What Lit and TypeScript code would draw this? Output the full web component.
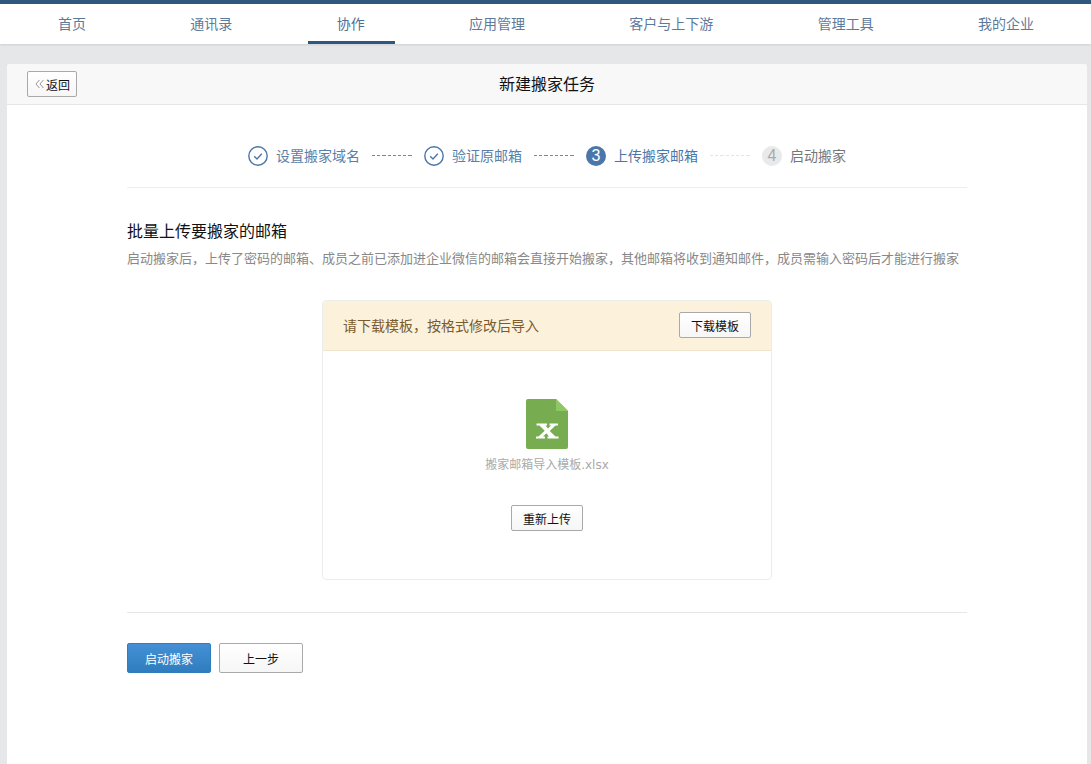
import { LitElement, html, css, svg } from "lit";
import { customElement } from "lit/decorators.js";

const NAV = ["首页", "通讯录", "协作", "应用管理", "客户与上下游", "管理工具", "我的企业"];
const STEPS = [
  { label: "设置搬家域名", state: "done", n: 1 },
  { label: "验证原邮箱", state: "done", n: 2 },
  { label: "上传搬家邮箱", state: "active", n: 3 },
  { label: "启动搬家", state: "todo", n: 4 },
];

const check = svg`<svg class="ico" width="20" height="20" viewBox="0 0 20 20" fill="none">
  <circle cx="10" cy="10" r="9.2" stroke="#4a76a8" stroke-width="1.4"/>
  <path d="M6.2 10.2l2.8 2.7 4.8-5.2" stroke="#4a76a8" stroke-width="1.4"/>
</svg>`;

@customElement("app-root")
export class AppRoot extends LitElement {
  static styles = css`
    :host {
      display: block;
      height: 764px;
      overflow: hidden;
      background: #e6e7e8;
      font-family: "Noto Sans CJK SC", "Liberation Sans", sans-serif;
      font-size: 12px;
      color: #000;
    }
    * { box-sizing: border-box; }
    .nav {
      height: 44px;
      border-top: 4px solid #30587f;
      background: #fff;
      box-shadow: 0 1px 2px rgba(0, 0, 0, 0.1);
      display: flex;
      justify-content: space-between;
      padding: 0 27px 0 29px;
    }
    .nav a {
      padding: 0 30px 0 29px;
      height: 40px;
      font-size: 14px;
      color: #5d7a9b;
      border-bottom: 3px solid transparent;
      line-height: 39px;
    }
    .nav a.on { border-bottom-color: #30587f; color: #4f6f94; }
    .card {
      margin: 20px 4px 0 7px;
      height: 700px;
      background: #fff;
      border-radius: 3px 3px 0 0;
      overflow: hidden;
    }
    .head {
      height: 41px;
      background: #f8f8f8;
      border-bottom: 1px solid #e6e6e6;
      display: flex;
      align-items: center;
      justify-content: center;
      position: relative;
      padding-bottom: 3px;
      font-size: 16px;
      color: #111;
    }
    .back {
      position: absolute;
      left: 20px;
      top: 7px;
      width: 50px;
      height: 26px;
      padding: 0 0 0 1px;
      display: flex;
      align-items: center;
      justify-content: center;
      gap: 2px;
    }
    .btn {
      font: inherit;
      font-size: 12px;
      color: #111;
      background: linear-gradient(#fff, #f6f6f6);
      border: 1px solid #a9a9a9;
      border-radius: 2px;
    }
    .body {
      margin: 0 120px;
    }
    .steps {
      height: 83px;
      border-bottom: 1px solid #eeeeee;
      display: flex;
      align-items: center;
      justify-content: center;
      font-size: 14px;
      padding-top: 19px;
    }
    .step {
      display: flex;
      align-items: center;
      gap: 8px;
      color: #5a7ea8;
    }
    .step > span:last-child { position: relative; top: -1px; }
    .ico { display: block; flex: none; }
    .num {
      width: 20px;
      height: 20px;
      border-radius: 50%;
      display: flex;
      align-items: center;
      justify-content: center;
      font-size: 16px;
      font-family: "Liberation Sans", sans-serif;
    }
    .step.active { color: #4a76a8; }
    .step.active .num { background: #4a76a8; color: #fff; }
    .step.todo { color: #777; }
    .step.todo .num { background: #e8e9ea; color: #aaa; }
    .line {
      width: 40px;
      height: 1px;
      margin: 0 12px;
      background: repeating-linear-gradient(90deg, #5b8bc4 0 3.2px, transparent 3.2px 5.2px);
    }
    .line.off {
      background: repeating-linear-gradient(90deg, #e4e4e4 0 3.2px, transparent 3.2px 5.2px);
    }
    h2 {
      margin: 30px 0 0;
      font-size: 16px;
      font-weight: 400;
      line-height: 24px;
      color: #111;
    }
    .desc {
      margin: 6px 0 0;
      font-size: 13px;
      line-height: 20px;
      color: #888;
      white-space: nowrap;
    }
    .box {
      width: 450px;
      height: 280px;
      margin: 32px auto 0;
      border: 1px solid #ececec;
      border-radius: 4px;
      overflow: hidden;
      display: flex;
      flex-direction: column;
    }
    .tip {
      flex: none;
      height: 51px;
      margin: -1px -1px 0;
      padding: 0 21px 0 21px;
      background: #fcf2dc;
      border-bottom: 1px solid #f0e6d0;
      display: flex;
      align-items: center;
      justify-content: space-between;
      font-size: 14px;
      color: #7b5a2c;
    }
    .tip .btn, .reup { width: 72px; height: 26px; padding: 0; }
    .file {
      display: flex;
      flex-direction: column;
      align-items: center;
      padding-top: 48px;
    }
    .file svg { display: block; }
    .name {
      margin-top: 7px;
      font-family: "DejaVu Sans", "Noto Sans CJK SC", sans-serif;
      font-size: 12px;
      line-height: 18px;
      color: #aaa;
    }
    .reup { margin-top: 31px; }
    .foot {
      margin-top: 32px;
      padding-top: 30px;
      border-top: 1px solid #e6e6e6;
      display: flex;
      gap: 8px;
    }
    .foot .btn { width: 84px; height: 30px; padding: 0; }
    .foot .primary {
      color: #fff;
      background: linear-gradient(#4590d6, #2f7dbd);
      border-color: #2f7dbd;
    }
  `;

  private stepView(s: (typeof STEPS)[number]) {
    return html`<div class="step ${s.state}">
      ${s.state === "done" ? check : html`<span class="num">${s.n}</span>`}
      <span>${s.label}</span>
    </div>`;
  }

  render() {
    return html`
      <nav class="nav">
        ${NAV.map((n) => html`<a class=${n === "协作" ? "on" : ""}>${n}</a>`)}
      </nav>
      <section class="card">
        <header class="head">
          <button class="btn back">
            <svg width="9" height="10" viewBox="0 0 9 10" fill="none" stroke="#999" stroke-width="1">
              <path d="M4.4 1L1 5l3.4 4M8.4 1L5 5l3.4 4" />
            </svg>
            <span>返回</span>
          </button>
          新建搬家任务
        </header>
        <div class="body">
          <div class="steps">
            ${STEPS.map(
              (s, i) => html`${this.stepView(s)}${i < STEPS.length - 1
                ? html`<span class="line ${i === 2 ? "off" : ""}"></span>`
                : ""}`
            )}
          </div>
          <h2>批量上传要搬家的邮箱</h2>
          <p class="desc">启动搬家后，上传了密码的邮箱、成员之前已添加进企业微信的邮箱会直接开始搬家，其他邮箱将收到通知邮件，成员需输入密码后才能进行搬家</p>
          <div class="box">
            <div class="tip">
              <span>请下载模板，按格式修改后导入</span>
              <button class="btn">下载模板</button>
            </div>
            <div class="file">
              <svg width="42" height="50" viewBox="0 0 42 50">
                <path d="M2 0H30L42 12V48a2 2 0 0 1-2 2H2a2 2 0 0 1-2-2V2a2 2 0 0 1 2-2z" fill="#77ac50" />
                <path d="M30 0L42 12H30z" fill="#8fc765" />
                <path
                  fill="#fff"
                  d="M10.5 24.5H21V26.5H19.5L22 29.6 25 26.5H23.5V24.5H32V26.5H29.5L23.7 32 29.5 37.5H32.5V39.5H21.5V37.5H23L20.3 34.3 17 37.5H19V39.5H10V37.5H12.5L18.7 31.8 13.5 26.5H10.5Z"
                />
              </svg>
              <div class="name">搬家邮箱导入模板.xlsx</div>
              <button class="btn reup">重新上传</button>
            </div>
          </div>
          <div class="foot">
            <button class="btn primary">启动搬家</button>
            <button class="btn">上一步</button>
          </div>
        </div>
      </section>
    `;
  }
}
